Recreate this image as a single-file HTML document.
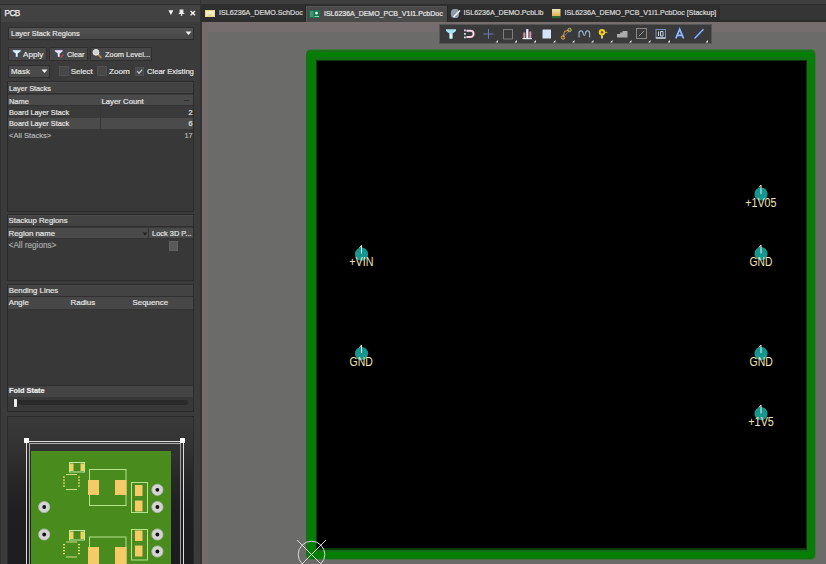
<!DOCTYPE html>
<html><head><meta charset="utf-8">
<style>
*{margin:0;padding:0;box-sizing:border-box}
html,body{width:826px;height:564px;overflow:hidden;background:#2b2b2b;font-family:"Liberation Sans",sans-serif;font-size:7.3px;color:#e4e4e4}
.a{position:absolute}
.t{position:absolute;white-space:nowrap;line-height:1;-webkit-text-stroke:0.2px currentColor}
.btn{position:absolute;background:#474747;border:1px solid #2f2f2f;height:14px;top:47px}
.grp{position:absolute;left:7px;width:187px;background:#383838;border:1px solid #2b2b2b}
.hdr{position:absolute;left:0;width:185px;height:12px;background:#434343;border-top:1px solid #4a4a4a;border-bottom:1px solid #2f2f2f}
.colh{position:absolute;left:0;width:185px;height:11px;background:#4a4a4a;border-bottom:1px solid #333}
.cb{position:absolute;width:10px;height:10px;background:#474747;border:1px solid #505050}
</style></head><body>
<!-- top strip -->
<div class="a" style="left:0;top:0;width:826px;height:4px;background:#3c3c3c"></div>
<div class="a" style="left:0;top:4px;width:826px;height:1.2px;background:#2e2e2e"></div>
<!-- ===== PANEL ===== -->
<div class="a" style="left:0;top:5px;width:201px;height:559px;background:#3b3b3b"></div>
<div class="a" style="left:0;top:5.2px;width:201px;height:16.8px;background:#424242"></div>
<div class="a" style="left:0;top:8px;width:1px;height:556px;background:#2f2f2f"></div>
<div class="t" style="left:4.6px;top:9.6px;font-size:8.2px;letter-spacing:-0.55px;color:#f2f2f2;-webkit-text-stroke:0.25px #f2f2f2">PCB</div>
<!-- header icons -->
<svg class="a" style="left:164px;top:6px" width="36" height="14" viewBox="164 6 36 14">
 <path d="M168.4 10.3 H173.4 L170.9 14.9 Z" fill="#f4f4f4"/>
 <path d="M179.6 9.6 H183.4 V13 H184.3 V14.1 H178.7 V13 H179.6 Z" fill="#e8e8e8"/>
 <rect x="180.9" y="14" width="1.3" height="1.9" fill="#e0e0e0"/>
 <path d="M190.6 11 L195 15.3 M195 11 L190.6 15.3" stroke="#f4f4f4" stroke-width="1.4"/>
</svg>
<!-- dropdown -->
<div class="a" style="left:8px;top:27px;width:186px;height:13px;background:linear-gradient(#535353,#474747);border:1px solid #2d2d2d"></div>
<div class="t" style="left:11px;top:30px;font-size:7.45px">Layer Stack Regions</div>
<svg class="a" style="left:185px;top:31px" width="7" height="5"><path d="M0.5 0.5 H6.5 L3.5 4 Z" fill="#eee"/></svg>
<!-- buttons -->
<div class="btn" style="left:8px;width:39px"></div>
<svg class="a" style="left:12px;top:49px" width="10" height="9" viewBox="0 0 10 9"><path d="M0.3 0.7 H9.2 V2.6 L6.1 4.8 V8.2 H3.4 V4.8 L0.3 2.6 Z" fill="#4a6ea8"/><path d="M1 1.2 H8.5 V2.3 L5.6 4.5 V7.8 H3.9 V4.5 L1 2.3 Z" fill="#e8f6fc"/></svg>
<div class="t" style="left:23px;top:50.5px;font-size:8.1px">Apply</div>
<div class="btn" style="left:49px;width:39px"></div>
<svg class="a" style="left:53.5px;top:49px" width="10" height="9" viewBox="0 0 10 9"><path d="M0.3 0.7 H9.2 V2.6 L6.1 4.8 V8.2 H3.4 V4.8 L0.3 2.6 Z" fill="#5a5aa0"/><path d="M1 1.2 H8.5 V2.3 L5.6 4.5 V7.8 H3.9 V4.5 L1 2.3 Z" fill="#ece8fc"/><path d="M6.5 8.5 L9.5 5.5" stroke="#c84040" stroke-width="1.3"/></svg>
<div class="t" style="left:67px;top:50.5px;font-size:7.3px">Clear</div>
<div class="btn" style="left:90px;width:62px"></div>
<svg class="a" style="left:92px;top:48px" width="11" height="12" viewBox="0 0 11 12"><path d="M5.8 5.8 L9.2 9.8" stroke="#b08850" stroke-width="1.8"/><circle cx="4" cy="4.3" r="2.9" fill="#d0d0d0" stroke="#f0f0f0" stroke-width="0.9"/></svg>
<div class="t" style="left:105px;top:50.5px;font-size:7.45px">Zoom Level...</div>
<!-- mask row -->
<div class="a" style="left:8px;top:65px;width:42px;height:13px;background:#4a4a4a;border:1px solid #2d2d2d"></div>
<div class="t" style="left:11px;top:68px;font-size:7.9px">Mask</div>
<svg class="a" style="left:41px;top:69px" width="7" height="5"><path d="M0.5 0.5 H6.5 L3.5 4 Z" fill="#eee"/></svg>
<div class="cb" style="left:59px;top:66px"></div>
<div class="t" style="left:70.8px;top:68px;font-size:7.9px">Select</div>
<div class="cb" style="left:97px;top:66px"></div>
<div class="t" style="left:109px;top:68px;font-size:8.1px">Zoom</div>
<div class="cb" style="left:135px;top:66.5px;width:9px;height:9px"></div>
<svg class="a" style="left:135px;top:66.5px" width="9" height="9"><path d="M2.2 4.2 L4 6.3 L7 2.6" stroke="#d0d0d0" stroke-width="1.2" fill="none"/></svg>
<div class="t" style="left:147px;top:68px;font-size:7.6px">Clear Existing</div>
<!-- Layer Stacks group -->
<div class="grp" style="top:81px;height:131px">
 <div class="hdr" style="top:0"></div>
 <div class="t" style="left:1px;top:2.5px;font-size:7.25px">Layer Stacks</div>
 <div class="colh" style="top:13px"></div>
 <div class="t" style="left:1px;top:15.5px;font-size:7.45px">Name</div>
 <div class="t" style="left:93.5px;top:15.5px;font-size:7.75px">Layer Count</div>
 <div class="a" style="left:176px;top:17.5px;width:5px;height:1.5px;background:#2e2e2e"></div>
 <div class="a" style="left:0;top:24px;width:185px;height:12px;background:#3a3a3a"></div>
 <div class="t" style="left:1px;top:27px;font-size:7.3px">Board Layer Stack</div>
 <div class="t" style="left:180.5px;top:27px">2</div>
 <div class="a" style="left:0;top:36px;width:185px;height:11px;background:#4b4b4b"></div>
 <div class="t" style="left:1px;top:38px;font-size:7.3px">Board Layer Stack</div>
 <div class="t" style="left:180.5px;top:38px">6</div>
 <div class="a" style="left:92px;top:24px;width:1px;height:23px;background:#353535"></div>
 <div class="t" style="left:1px;top:50px;color:#b4b4b4;font-size:7.6px">&lt;All Stacks&gt;</div>
 <div class="t" style="left:176.5px;top:50px;color:#b4b4b4">17</div>
</div>
<!-- Stackup Regions -->
<div class="grp" style="top:214px;height:67px">
 <div class="hdr" style="top:0"></div>
 <div class="t" style="left:0.6px;top:1.6px;font-size:7.8px">Stackup Regions</div>
 <div class="colh" style="top:13px"></div>
 <div class="a" style="left:140px;top:13px;width:1px;height:11px;background:#333"></div>
 <div class="t" style="left:0.6px;top:14.8px;font-size:7.8px">Region name</div>
 <svg class="a" style="left:134px;top:17px" width="6" height="4"><path d="M0.5 0.5 H5.5 L3 3.5 Z" fill="#222"/></svg>
 <div class="t" style="left:144px;top:14.8px;font-size:7.45px">Lock 3D P...</div>
 <div class="t" style="left:0.6px;top:26.5px;color:#a8a8a8;font-size:8.2px">&lt;All regions&gt;</div>
 <div class="a" style="left:160.5px;top:25.5px;width:9px;height:10px;background:#595959;border:1px solid #626262"></div>
</div>
<!-- Bending Lines -->
<div class="grp" style="top:284px;height:128px">
 <div class="hdr" style="top:0"></div>
 <div class="t" style="left:0.8px;top:2px;font-size:7.8px">Bending Lines</div>
 <div class="colh" style="top:12px;height:13px;background:#474747"></div>
 <div class="t" style="left:0.8px;top:14px;font-size:7.8px">Angle</div>
 <div class="t" style="left:62.5px;top:14px;font-size:7.95px">Radius</div>
 <div class="t" style="left:124.5px;top:14px;font-size:7.9px">Sequence</div>
 <div class="a" style="left:0;top:100px;width:185px;height:12px;background:#444;border-top:1px solid #2f2f2f"></div>
 <div class="t" style="left:1px;top:102.3px;font-weight:bold;color:#f0f0f0;font-size:7.35px">Fold State</div>
 <div class="a" style="left:5px;top:115px;width:175px;height:5px;background:#2a2a2a;border-radius:2px"></div>
 <div class="a" style="left:5.5px;top:114px;width:3px;height:8px;background:#eee;border-radius:1px"></div>
</div>
<!-- minimap -->
<div class="a" style="left:7px;top:416px;width:187px;height:148px;background:linear-gradient(#3a3a3a 0%,#333 20%,#262627 45%,#1f1f21 65%,#1d1d1f 100%);border:1px solid #2a2a2a;border-bottom:none"></div>
<div class="a" style="left:26px;top:441px;width:158px;height:123px;border-left:1px solid #ddd;border-top:1px solid #ddd;border-right:1px solid #ddd"></div>
<div class="a" style="left:29px;top:443px;width:152px;height:121px;border-left:1px solid #a8a8a8;border-top:1px solid #b0b0b0;border-right:1px solid #a0a0a0"></div>
<div class="a" style="left:24px;top:438px;width:5px;height:5px;background:#fff"></div>
<div class="a" style="left:180px;top:438px;width:5px;height:5px;background:#fff"></div>
<svg class="a" style="left:31px;top:451px" width="140" height="113" viewBox="31 451 140 113">
 <rect x="31" y="451" width="140" height="113" fill="#4a8b1e"/>
 <g id="set">
 </g>
 <!-- cap1 -->
 <rect x="69.5" y="462.5" width="15" height="9.5" fill="none" stroke="#c0e8a0" stroke-width="1"/>
 <rect x="70" y="463.5" width="3.5" height="7.5" fill="#f0d060"/><rect x="80.5" y="463.5" width="3.5" height="7.5" fill="#f0d060"/>
 <!-- qfn1 -->
 <rect x="66" y="474" width="11" height="1" fill="#c8e088"/><rect x="66" y="489" width="11" height="1" fill="#c8e088"/><rect x="63" y="476.5" width="2" height="1.2" fill="#e8e070"/><rect x="78" y="476.5" width="2" height="1.2" fill="#e8e070"/><rect x="63" y="479.5" width="2" height="1.2" fill="#e8e070"/><rect x="78" y="479.5" width="2" height="1.2" fill="#e8e070"/><rect x="63" y="482.5" width="2" height="1.2" fill="#e8e070"/><rect x="78" y="482.5" width="2" height="1.2" fill="#e8e070"/><rect x="63" y="485.5" width="2" height="1.2" fill="#e8e070"/><rect x="78" y="485.5" width="2" height="1.2" fill="#e8e070"/>
 <!-- inductor1 -->
 <rect x="89.5" y="469.5" width="36.5" height="36" fill="none" stroke="#b4e48c" stroke-width="1"/>
 <rect x="88" y="480" width="11" height="15" fill="#f6ca66"/><rect x="115" y="480" width="11.5" height="15" fill="#f6ca66"/>
 <!-- right comp1 -->
 <rect x="131.5" y="482.5" width="16" height="30" fill="none" stroke="#b4e48c" stroke-width="1"/>
 <rect x="135" y="485" width="7.5" height="11" fill="#f6ca66"/><rect x="135" y="500.5" width="7.5" height="11" fill="#f6ca66"/>
 <!-- TH pads -->
 <g fill="#d4d4d4" stroke="#b8b8b8" stroke-width="0.8">
  <circle cx="157.4" cy="489.8" r="5.6"/><circle cx="157.4" cy="507" r="5.6"/>
  <circle cx="44.2" cy="507" r="5.6"/><circle cx="44.2" cy="534.5" r="5.6"/>
  <circle cx="157.4" cy="534.5" r="5.6"/><circle cx="157.4" cy="551.5" r="5.6"/>
 </g>
 <g fill="#111">
  <circle cx="157.4" cy="489.8" r="1.9"/><circle cx="157.4" cy="507" r="1.9"/>
  <circle cx="44.2" cy="507" r="1.9"/><circle cx="44.2" cy="534.5" r="1.9"/>
  <circle cx="157.4" cy="534.5" r="1.9"/><circle cx="157.4" cy="551.5" r="1.9"/>
 </g>
 <!-- cap2 -->
 <rect x="69.5" y="530.5" width="15" height="9.5" fill="none" stroke="#c0e8a0" stroke-width="1"/>
 <rect x="70" y="531.5" width="3.5" height="7.5" fill="#f0d060"/><rect x="80.5" y="531.5" width="3.5" height="7.5" fill="#f0d060"/>
 <!-- qfn2 -->
 <rect x="66" y="541.5" width="11" height="1" fill="#c8e088"/><rect x="66" y="556.5" width="11" height="1" fill="#c8e088"/><rect x="63" y="544.0" width="2" height="1.2" fill="#e8e070"/><rect x="78" y="544.0" width="2" height="1.2" fill="#e8e070"/><rect x="63" y="547.0" width="2" height="1.2" fill="#e8e070"/><rect x="78" y="547.0" width="2" height="1.2" fill="#e8e070"/><rect x="63" y="550.0" width="2" height="1.2" fill="#e8e070"/><rect x="78" y="550.0" width="2" height="1.2" fill="#e8e070"/><rect x="63" y="553.0" width="2" height="1.2" fill="#e8e070"/><rect x="78" y="553.0" width="2" height="1.2" fill="#e8e070"/>
 <!-- inductor2 -->
 <rect x="89.5" y="537" width="36.5" height="36" fill="none" stroke="#b4e48c" stroke-width="1"/>
 <rect x="88" y="547" width="11" height="17" fill="#f6ca66"/><rect x="115" y="547" width="11.5" height="17" fill="#f6ca66"/>
 <!-- right comp2 -->
 <rect x="131.5" y="529.5" width="16" height="30.5" fill="none" stroke="#b4e48c" stroke-width="1"/>
 <rect x="135" y="530.5" width="7.5" height="10.5" fill="#f6ca66"/><rect x="135" y="545.5" width="7.5" height="11" fill="#f6ca66"/>
</svg>

<!-- ===== divider ===== -->
<div class="a" style="left:200px;top:0;width:1.5px;height:564px;background:#353233"></div>

<!-- ===== TAB BAR ===== -->
<div class="a" style="left:201px;top:0;width:625px;height:22px;background:#353535"></div>
<div class="a" style="left:201px;top:0;width:625px;height:4px;background:#3e3e3e"></div>
<div class="a" style="left:201px;top:4px;width:625px;height:1.2px;background:#2e2e2e"></div>
<div class="a" style="left:201px;top:19.5px;width:625px;height:2.5px;background:#2c2b2b"></div>
<div class="a" style="left:201px;top:5px;width:519px;height:17px;background:#2e2e2e"></div>
<!-- tab1 -->
<svg class="a" style="left:205.3px;top:9.5px" width="10" height="7.2"><rect x="0" y="0" width="10" height="7.2" fill="#e6d890"/><rect x="1" y="1" width="8" height="5.2" fill="#f6eec4"/><path d="M2.5 5 H7.5" stroke="#d8c070" stroke-width="1"/></svg>
<div class="t" style="left:219px;top:10.3px;font-size:7.15px;color:#dcdcdc">ISL6236A_DEMO.SchDoc</div>
<div class="a" style="left:305px;top:4px;width:1px;height:18px;background:#262626"></div>
<!-- tab2 active -->
<div class="a" style="left:306px;top:5.5px;width:141.5px;height:16.5px;background:#4a4a4a;border-left:1px solid #585858;border-top:1px solid #525252"></div>
<div class="a" style="left:447.3px;top:5px;width:1px;height:17px;background:#262626"></div>
<svg class="a" style="left:309px;top:9.5px" width="11" height="8"><rect x="0" y="0" width="11" height="8" fill="#1e6e52"/><rect x="1" y="1" width="3.5" height="6" fill="#3a9a78"/><circle cx="7.5" cy="3" r="1.5" fill="#d0f0e0"/><path d="M5.5 6.5 H10" stroke="#90d0b0" stroke-width="1"/></svg>
<div class="t" style="left:324px;top:10.3px;font-size:7.0px;color:#e8e8e8">ISL6236A_DEMO_PCB_V1I1.PcbDoc</div>
<!-- tab3 -->
<svg class="a" style="left:450px;top:9px" width="11" height="9" viewBox="0 0 11 9"><path d="M1 4.5 A4 4 0 0 1 9 3 L9 6 A4 4 0 0 1 1 4.5 Z" fill="#8a9aa8"/><path d="M3.5 8 L10 1.5" stroke="#f0f0f0" stroke-width="1.6"/></svg>
<div class="t" style="left:463.5px;top:10.3px;font-size:7.1px;color:#dcdcdc">ISL6236A_DEMO.PcbLib</div>
<!-- tab4 -->
<svg class="a" style="left:552px;top:9px" width="8.5" height="9.5"><defs><linearGradient id="g4" x1="0" y1="0" x2="0" y2="1"><stop offset="0" stop-color="#e8e8b0"/><stop offset="1" stop-color="#e0b050"/></linearGradient></defs><rect x="0" y="0" width="8.5" height="7.2" fill="url(#g4)"/><rect x="0" y="7.2" width="8.5" height="2" fill="#2a6a30"/></svg>
<div class="t" style="left:564.5px;top:10.3px;font-size:7.1px;color:#dcdcdc">ISL6236A_DEMO_PCB_V1I1.PcbDoc [Stackup]</div>
<!-- ===== CANVAS ===== -->
<div class="a" style="left:201.5px;top:22px;width:624.5px;height:542px;background:#6b6b6a"></div>
<div class="a" style="left:201.5px;top:22px;width:624.5px;height:10px;background:#766d6f"></div>
<div class="a" style="left:201.5px;top:22px;width:6.5px;height:542px;background:#736c6d"></div>
<!-- board -->
<div class="a" style="left:305.6px;top:49.3px;width:510.7px;height:510.5px;background:#3f773f;border-radius:5px"></div>
<div class="a" style="left:306.4px;top:50.2px;width:509px;height:508.8px;background:#1a6f1a;border-radius:4.5px"></div>
<div class="a" style="left:308px;top:52px;width:506px;height:505.5px;background:#038003;border-radius:3px"></div>
<div class="a" style="left:313.5px;top:57.3px;width:495px;height:494.5px;background:#147014;border-radius:1px"></div>
<div class="a" style="left:316px;top:59.5px;width:491px;height:490.5px;background:#0a3a0a"></div>
<div class="a" style="left:317.4px;top:60.6px;width:488.4px;height:487.9px;background:#000"></div>

<!-- toolbar -->
<div class="a" style="left:438.5px;top:24px;width:273.5px;height:19.5px;background:#565656"></div>
<div class="a" style="left:439.5px;top:25px;width:271.5px;height:17.5px;background:#3a3a3a"></div>
<svg class="a" style="left:439px;top:24px" width="273" height="20" viewBox="0 0 273 20">
 <!-- filter -->
 <path d="M7 5.3 H17 V7 L13.4 9.8 V14.6 H10.6 V9.8 L7 7 Z" fill="#a8e2f0"/>
 <path d="M10.6 9.8 H13.4 V14.6 H10.6 Z" fill="#d8f4fa"/>
 <!-- magnet -->
 <path d="M27.5 6.8 H31.5 A3.1 3.1 0 0 1 31.5 13 H27.5" stroke="#e6bcd0" stroke-width="2" fill="none"/>
 <path d="M27.5 6.8 H31.5 A3.1 3.1 0 0 1 31.5 13 H27.5" stroke="#f8f0f4" stroke-width="0.8" fill="none"/>
 <rect x="25" y="5.5" width="1.8" height="1.8" fill="#d8d8e8"/><rect x="25" y="9" width="1.8" height="1.8" fill="#d8d8e8"/><rect x="25" y="12.5" width="1.8" height="1.8" fill="#d8d8e8"/>
 <!-- cross -->
 <path d="M49.5 5 V15 M44.5 10 H54.5" stroke="#6c78b8" stroke-width="1"/>
 <!-- square outline -->
 <rect x="64.5" y="5.5" width="9" height="9.5" fill="none" stroke="#7c7c7c" stroke-width="1"/>
 <!-- bar chart -->
 <rect x="84.3" y="8.5" width="2" height="5.5" fill="#d890a8"/><rect x="87.2" y="5" width="2.2" height="9" fill="#eef0ff"/><rect x="90.3" y="7.5" width="2" height="6.5" fill="#d890a8"/><rect x="83.5" y="14" width="9.5" height="1.2" fill="#e8e8f0"/>
 <!-- filled square -->
 <rect x="103.5" y="5.5" width="8.5" height="9" fill="#d6e2f6" rx="0.5"/>
 <!-- route -->
 <path d="M124 13.5 L125.5 7.5 L130.5 6" stroke="#d09030" stroke-width="1.1" fill="none"/><path d="M124.5 13 L130.5 6.5" stroke="#6868c0" stroke-width="1"/><circle cx="124" cy="13.5" r="1.7" fill="none" stroke="#e8b040" stroke-width="1"/><circle cx="130.5" cy="6" r="1.7" fill="none" stroke="#c8c850" stroke-width="1"/>
 <!-- wave -->
 <path d="M140 13.5 V9.5 Q140 6.8 142 6.8 Q143.8 6.8 144.2 9.5 Q144.6 11.5 145.3 11.5 Q146 11.5 146.4 9.5 Q146.8 6.8 148.6 6.8 Q150.6 6.8 150.6 9.5 V13.5" stroke="#98acc8" stroke-width="1.2" fill="none"/>
 <!-- pin -->
 <circle cx="163" cy="8.3" r="3.2" fill="#f0d028"/><circle cx="163" cy="8.3" r="1.2" fill="#705010"/><path d="M163 11.2 V14.5" stroke="#f0e070" stroke-width="1.8"/><path d="M166 8.3 H168.5" stroke="#c0c060" stroke-width="1"/>
 <!-- stairs -->
 <path d="M178 13.5 V10 H181 V8.5 H183.5 V7 H188.5 V13.5 Z" fill="#ababab"/>
 <!-- rect with diagonal -->
 <rect x="197.5" y="4.5" width="10" height="10" fill="none" stroke="#888" stroke-width="1"/><path d="M200 12 L205 7" stroke="#9a9a9a" stroke-width="1"/>
 <!-- rect 10 -->
 <rect x="217" y="5.5" width="9.5" height="8.5" fill="none" stroke="#7890b8" stroke-width="1"/><path d="M219.5 7.5 V12 M221.5 7.5 H224 V12 H221.5 Z" stroke="#d8e0f0" stroke-width="0.9" fill="none"/><path d="M217 14 H226.5" stroke="#e0e8f4" stroke-width="1.2"/>
 <!-- A -->
 <path d="M236.5 14.5 L240.7 5 L244.9 14.5" stroke="#1e3a78" stroke-width="3" fill="none"/>
 <path d="M236.8 14.5 L240.7 5.3 L244.6 14.5 M238.3 11.3 H243.1" stroke="#98b8ec" stroke-width="1.7" fill="none"/>
 <!-- line -->
 <path d="M255.5 14.5 L264.5 5.2" stroke="#1e3a78" stroke-width="3"/>
 <path d="M255.5 14.5 L264.5 5.2" stroke="#9cbce8" stroke-width="1.3"/>
</svg>
<svg class="a" style="left:439px;top:24px" width="273" height="20" viewBox="0 0 273 20">
 <g fill="#e8e8e8">
 <path d="M56.5 18.5 L59 16 V18.5 Z"/><path d="M75.5 18.5 L78 16 V18.5 Z"/><path d="M94.5 18.5 L97 16 V18.5 Z"/><path d="M114 18.5 L116.5 16 V18.5 Z"/><path d="M133 18.5 L135.5 16 V18.5 Z"/><path d="M152 18.5 L154.5 16 V18.5 Z"/><path d="M171 18.5 L173.5 16 V18.5 Z"/><path d="M190 18.5 L192.5 16 V18.5 Z"/><path d="M209 18.5 L211.5 16 V18.5 Z"/><path d="M228.5 18.5 L231 16 V18.5 Z"/><path d="M266.5 18.5 L269 16 V18.5 Z"/>
 </g>
</svg>
<!-- pads -->
<svg class="a" style="left:317px;top:60px" width="489" height="489" viewBox="317 60 489 489">
 <g fill="#17968f">
  <circle cx="361.5" cy="254.2" r="6.6"/>
  <circle cx="761" cy="194" r="6.6"/>
  <circle cx="761" cy="253.7" r="6.6"/>
  <circle cx="361.5" cy="353.5" r="6.6"/>
  <circle cx="761" cy="353.5" r="6.6"/>
  <circle cx="761" cy="413.7" r="6.6"/>
 </g>
 <g stroke="#d8f8ec" stroke-width="1" fill="none">
  <path d="M361.5 245.5 V253.5 M361.5 245.5 L359.5 248"/>
  <path d="M761 185 V194 M761 185 L759 187.5"/>
  <path d="M761 245 V253.5 M761 245 L759 247.5"/>
  <path d="M361.5 345 V353 M361.5 345 L359.5 347.5"/>
  <path d="M761 345 V353 M761 345 L759 347.5"/>
  <path d="M761 405 V413.5 M761 405 L759 407.5"/>
 </g>
 <g fill="#f0e4b8" font-family="Liberation Sans" font-size="12.5">
  <text x="349.3" y="265.6" textLength="24.2" lengthAdjust="spacingAndGlyphs">+VIN</text>
  <text x="745.3" y="206.5" textLength="31.2" lengthAdjust="spacingAndGlyphs">+1V05</text>
  <text x="749.6" y="266.2" textLength="22.8" lengthAdjust="spacingAndGlyphs">GND</text>
  <text x="349.6" y="366.3" textLength="23.2" lengthAdjust="spacingAndGlyphs">GND</text>
  <text x="749.6" y="366.3" textLength="23.2" lengthAdjust="spacingAndGlyphs">GND</text>
  <text x="748.3" y="426.3" textLength="25.6" lengthAdjust="spacingAndGlyphs">+1V5</text>
 </g>
</svg>
<!-- origin marker -->
<svg class="a" style="left:290px;top:533px" width="45" height="31" viewBox="290 533 45 31">
 <circle cx="311.5" cy="554.5" r="13.3" fill="none" stroke="#d8d8d8" stroke-width="1"/>
 <path d="M297 540 L326 569 M326 540 L297 569" stroke="#d8d8d8" stroke-width="1"/>
</svg>
</body></html>
